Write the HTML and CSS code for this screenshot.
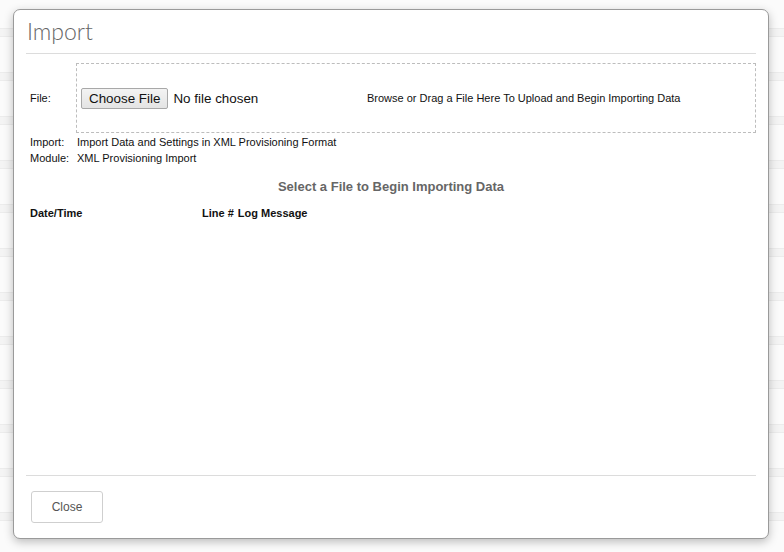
FILE: index.html
```html
<!DOCTYPE html>
<html>
<head>
<meta charset="utf-8">
<link rel="stylesheet" href="styles.css">
</head>
<body>
<div class="modal">
  <div class="modal-header">
    <h1 class="modal-title">Import</h1>
  </div>
  <div class="modal-body">
    <div class="file-row">
      <div class="label">File:</div>
      <div class="dropzone">
        <input class="file-input" type="file">
        <span class="drop-hint">Browse or Drag a File Here To Upload and Begin Importing Data</span>
      </div>
    </div>
    <div class="info-row"><div class="label">Import:</div><div class="value">Import Data and Settings in XML Provisioning Format</div></div>
    <div class="info-row"><div class="label">Module:</div><div class="value">XML Provisioning Import</div></div>
    <h2 class="status">Select a File to Begin Importing Data</h2>
    <div class="log-head">
      <div class="col-date">Date/Time</div>
      <div class="col-line">Line #</div>
      <div class="col-msg">Log Message</div>
    </div>
  </div>
  <div class="modal-footer">
    <button class="btn-close" type="button">Close</button>
  </div>
</div>
</body>
</html>
```
FILE: styles.css
```css
html, body {
  margin: 0;
  padding: 0;
}
body {
  width: 784px;
  height: 552px;
  overflow: hidden;
  font-family: "Liberation Sans", Arial, sans-serif;
  font-size: 11px;
  color: #111;
  background-color: #fbfbfb;
  background-image: repeating-linear-gradient(to bottom,
    #fbfbfb 0px, #fbfbfb 28px,
    #ececec 28px, #ececec 29px,
    #f4f4f4 29px, #f4f4f4 36px,
    #ececec 36px, #ececec 37px,
    #fbfbfb 37px, #fbfbfb 44px);
  padding-top: 9px;
  box-sizing: border-box;
}
.modal {
  margin-left: 13px;
  width: 756px;
  height: 530px;
  box-sizing: border-box;
  background: #fff;
  border: 1px solid #9a9a9a;
  border-radius: 7px;
  box-shadow: 0 3px 10px rgba(0, 0, 0, 0.25);
  padding: 0 12px;
  display: flex;
  flex-direction: column;
}
.modal-header {
  height: 44px;
  border-bottom: 1px solid #dcdcdc;
  box-sizing: border-box;
  padding-left: 1px;
}
.modal-title {
  margin: 0;
  font-family: Lato, "Open Sans", sans-serif;
  font-weight: 300;
  font-size: 23px;
  line-height: 43px;
  color: #666;
}
.modal-body {
  flex: 1;
  padding-top: 9px;
}
.file-row {
  display: flex;
  align-items: center;
}
.label {
  width: 46px;
  padding-left: 4px;
  flex-shrink: 0;
}
.dropzone {
  flex: 1;
  height: 70px;
  box-sizing: border-box;
  border: 1px dashed #bdbdbd;
  display: flex;
  align-items: center;
  padding-left: 4px;
}
.file-input {
  width: 286px;
  font-family: "Liberation Sans", Arial, sans-serif;
  font-size: 13.4px;
  color: #111;
  margin: 0;
}
.file-input::file-selector-button {
  font-family: "Liberation Sans", Arial, sans-serif;
  font-size: 13.4px;
  height: 21px;
  padding: 0 7px;
  margin-right: 5px;
  background: linear-gradient(#f3f3f3, #e4e4e4);
  border: 1px solid #a8a8a8;
  border-radius: 2px;
  color: #111;
}
.drop-hint {
  font-size: 11px;
}
.info-row {
  display: flex;
  line-height: 16px;
}
.file-row + .info-row {
  margin-top: 1px;
}
.value {
  padding-left: 1px;
}
.status {
  margin: 13px 0 0;
  text-align: center;
  font-size: 13px;
  font-weight: bold;
  color: #666;
  line-height: 15px;
}
.log-head {
  display: flex;
  margin-top: 12px;
  font-weight: bold;
  font-size: 11px;
  line-height: 14px;
}
.col-date {
  width: 172px;
  padding-left: 4px;
}
.col-line {
  padding-right: 4px;
}
.modal-footer {
  height: 63px;
  border-top: 1px solid #dcdcdc;
  box-sizing: border-box;
  padding: 15px 0 0 5px;
}
.btn-close {
  width: 72px;
  height: 32px;
  background: #fff;
  border: 1px solid #cfcfcf;
  border-radius: 3px;
  font-family: "Liberation Sans", Arial, sans-serif;
  font-size: 12px;
  color: #555;
  padding: 0;
}
```
